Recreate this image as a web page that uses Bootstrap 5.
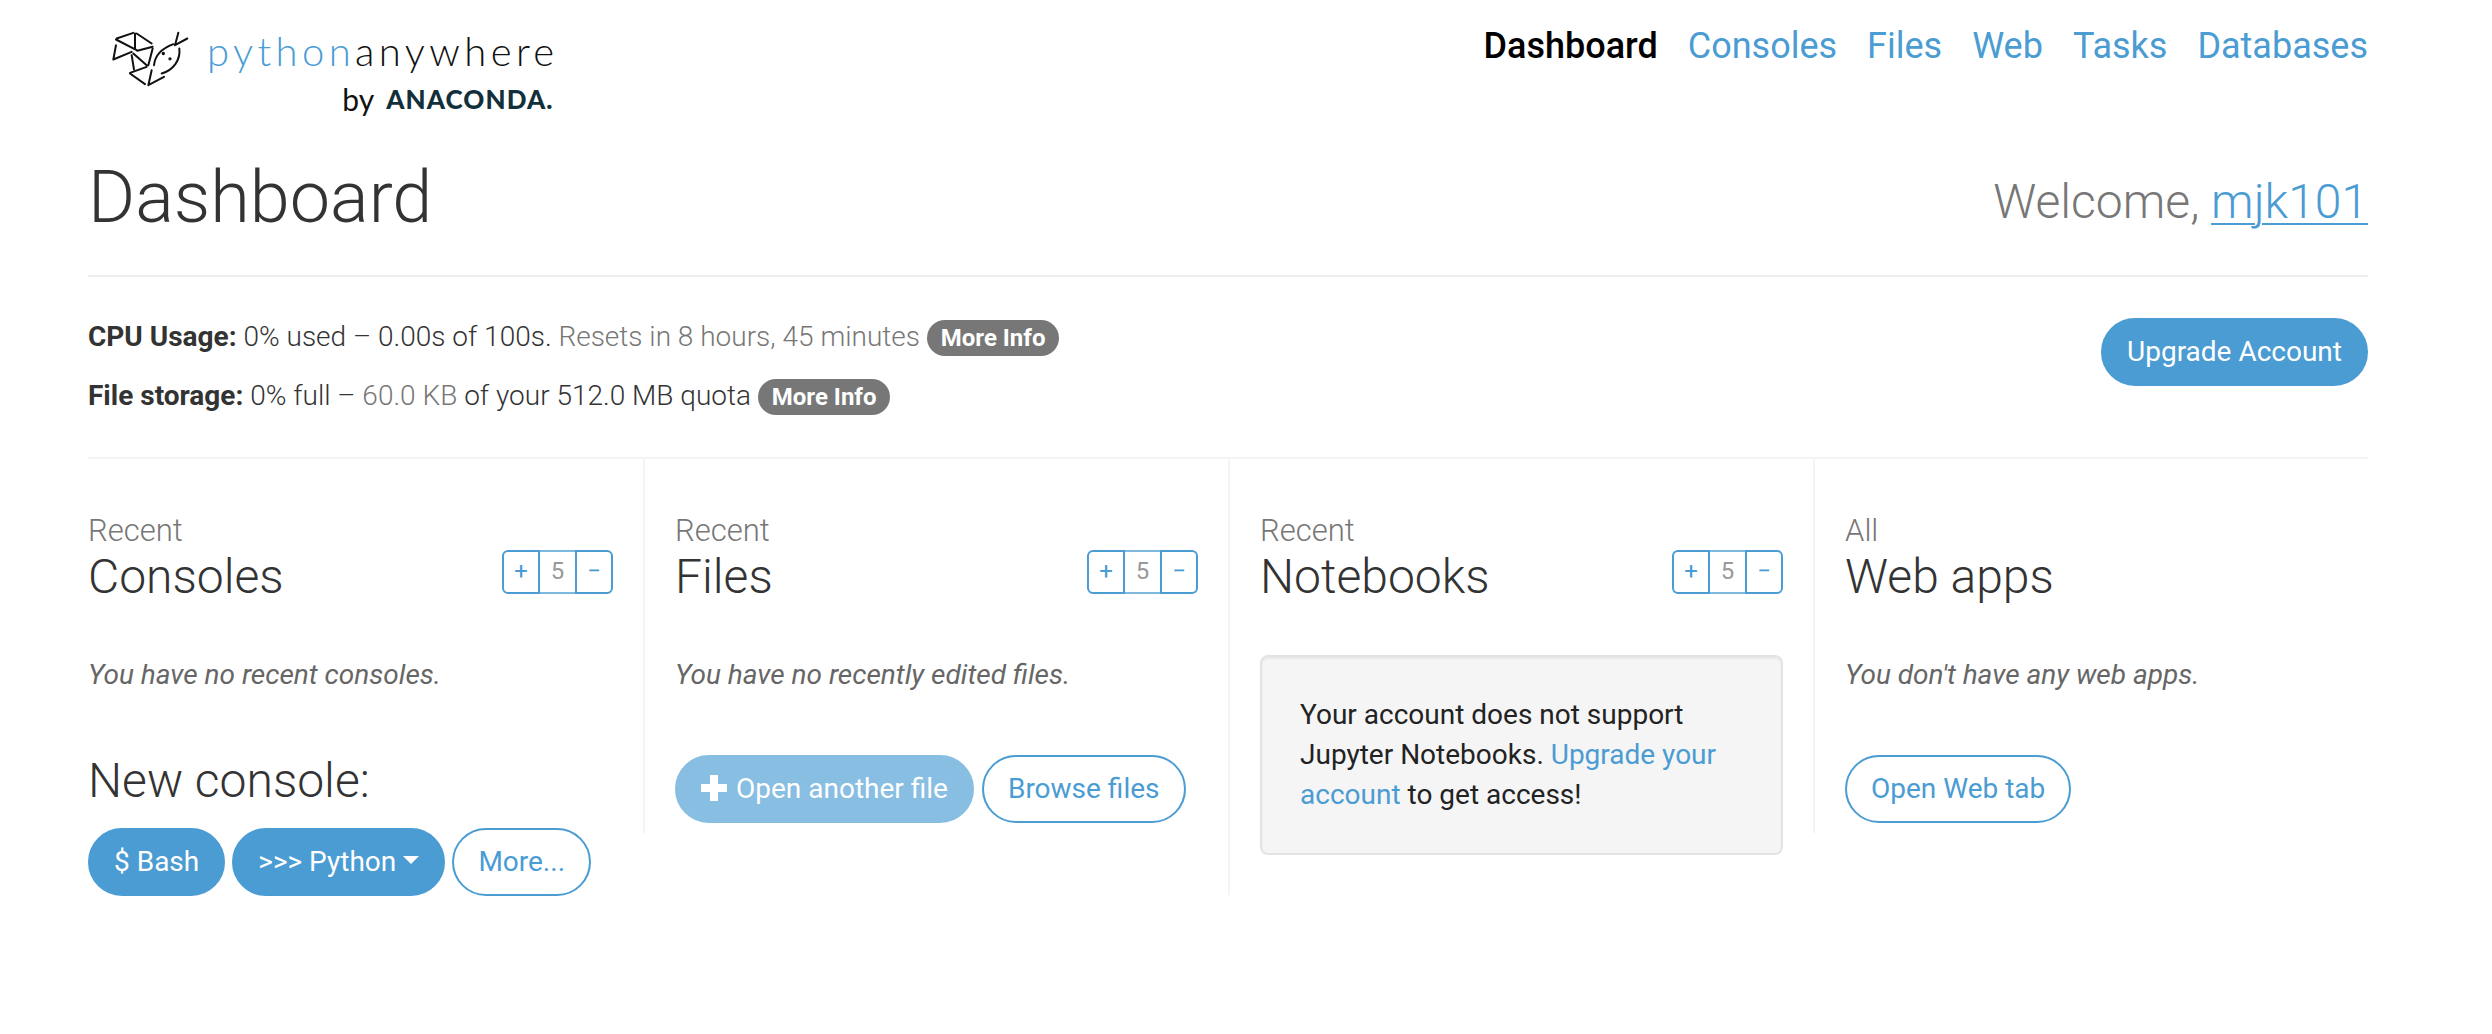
<!DOCTYPE html>
<html lang="en">
<head>
    <meta charset="UTF-8">
    <title>Dashboard : PythonAnywhere</title>
    <link href="https://cdn.jsdelivr.net/npm/bootstrap@5.3.0/dist/css/bootstrap.min.css" rel="stylesheet">
    <style>
        body { font-family: Roboto, "Liberation Sans", sans-serif; font-size: 28px; font-weight: 300; line-height: 40px; color: #333; background: #fff; }
        a { color: #4a9cd3; text-decoration: none; }
        .pa-page { width: 2340px; margin-left: 58px; padding: 0 30px; }
        .pa-header { height: 120px; }
        .pa-logo { color: #000; padding-left: 22px; padding-top: 28px; gap: 17px; }
        .pa-logo svg { width: 80px; height: 57px; margin-top: 2px; }
        .pa-logo-name { font-family: Lato, sans-serif; font-weight: 300; font-size: 40px; line-height: 46px; letter-spacing: 4.4px; color: #111; margin-right: -4px; }
        .pa-logo-name span { color: #4a9cd3; }
        .pa-logo-by { font-family: Lato, sans-serif; font-size: 30px; font-weight: 400; line-height: 36px; color: #111; gap: 12px; margin-top: 7px; margin-right: 1px; }
        .pa-logo-by b { font-family: Lato, sans-serif; font-weight: 900; font-size: 26px; color: #12303b; letter-spacing: 1.1px; }
        .pa-nav { gap: 30px; font-size: 36px; font-weight: 400; line-height: 50px; padding-top: 21px; }
        .pa-nav a.pa-current { color: #000; font-weight: 500; }
        .pa-title { height: 157px; border-bottom: 2px solid #eee; }
        .pa-title h1 { font-size: 72px; font-weight: 300; line-height: 80px; margin: 38px 0 0; }
        .pa-welcome { font-size: 48px; font-weight: 300; color: #777; line-height: 60px; margin-top: 52px; }
        .pa-welcome a { text-decoration: underline; text-underline-offset: 5px; text-decoration-thickness: 2px; }
        .pa-usage { height: 182px; border-bottom: 2px solid #f4f4f4; padding-top: 40px; }
        .pa-usage p { margin: 0 0 19px; line-height: 40px; }
        .pa-usage b { font-weight: 700; }
        .pa-muted { color: #777; }
        .pa-info { display: inline-block; background: #777; color: #fff; font-size: 24px; font-weight: 700; line-height: 24px; padding: 6px 14px; border-radius: 20px; vertical-align: 0; }
        .btn.pa-btn { --bs-btn-font-size: 28px; --bs-btn-font-weight: 400; --bs-btn-line-height: 40px; --bs-btn-padding-x: 24px; --bs-btn-padding-y: 12px; --bs-btn-border-width: 2px; --bs-btn-border-radius: 40px; --bs-btn-color: #fff; --bs-btn-bg: #4a9cd3; --bs-btn-border-color: #4a9cd3; --bs-btn-hover-color: #fff; --bs-btn-hover-bg: #3a8cc3; --bs-btn-hover-border-color: #3a8cc3; --bs-btn-disabled-color: #fff; --bs-btn-disabled-bg: #4a9cd3; --bs-btn-disabled-border-color: #4a9cd3; --bs-btn-disabled-opacity: .65; }
        .btn.pa-btn-line { --bs-btn-color: #4a9cd3; --bs-btn-bg: #fff; --bs-btn-hover-color: #4a9cd3; --bs-btn-hover-bg: #f2f8fc; --bs-btn-hover-border-color: #4a9cd3; }
        .pa-upgrade { margin-top: 1px; }
        .pa-cols { width: 2340px; margin-left: -30px; }
        .pa-col { width: 585px; padding: 0 30px; border-left: 2px solid #f4f4f4; }
        .pa-col:first-child { border-left: 0; }
        .pa-col-low { padding-bottom: 10px; }
        .pa-head { height: 124px; padding-top: 52px; }
        .pa-kicker { font-size: 31px; line-height: 40px; color: #777; font-weight: 300; }
        .pa-head h3 { font-size: 48px; font-weight: 300; line-height: 52px; margin: 0; }
        .pa-stepper { margin-top: 39px; height: 44px; width: 111px; font-size: 24px; line-height: 38px; text-align: center; font-weight: 400; }
        .pa-stepper span { color: #4a9cd3; border: 2px solid #4a9cd3; }
        .pa-stepper span:first-child { width: 38px; border-radius: 6px 0 0 6px; }
        .pa-stepper span:last-child { width: 38px; border-radius: 0 6px 6px 0; }
        .pa-stepper .pa-count { width: 35px; color: #999; font-weight: 400; border-top-color: #7db8df; border-bottom-color: #7db8df; border-left: 0; border-right: 0; }
        .pa-empty { font-style: italic; font-weight: 400; color: #666; margin: 72px 0 0; height: 40px; }
        .pa-actions { gap: 8px; margin-top: 60px; }
        .pa-new { font-size: 48px; font-weight: 300; line-height: 52px; margin: 60px 0 21px; }
        .pa-spawn { gap: 7px; }
        .pa-well { width: 523px; height: 200px; margin: 72px 0 40px; background: #f5f5f5; border: 2px solid #e3e3e3; border-radius: 8px; padding: 38px 38px; color: #222; font-weight: 400; box-shadow: inset 0 2px 2px rgba(0,0,0,.05); }
        .pa-plus { width: 26px; height: 26px; margin-right: 9px; vertical-align: -3px; }
    </style>
</head>
<body>
    <div class="pa-page">
        <div class="pa-header d-flex justify-content-between align-items-start">
            <a class="pa-logo d-flex align-items-start" href="#">
                <svg viewBox="90 60 240 170" fill="none" stroke="#111" stroke-width="6" stroke-linecap="round">
                    <path d="M110 85L160 68M108 88L170 120M100 148L108 105M100 148L155 125"/>
                    <path d="M170 70L215 100M165 70L165 115M172 122L218 110"/>
                    <path d="M160 130L200 165M155 135L162 178M218 115L205 165"/>
                    <path d="M150 188L200 170M150 190L195 222M215 180L205 225M205 225L252 200"/>
                    <path d="M222 165C225 135 245 115 280 102M298 115C302 150 280 180 245 190M295 68L285 105M322 85L285 105"/>
                    <circle cx="250" cy="130" r="2" fill="#111"/>
                    <circle cx="270" cy="146" r="2" fill="#111"/>
                </svg>
                <div class="d-flex flex-column align-items-end">
                    <div class="pa-logo-name"><span>python</span>anywhere</div>
                    <div class="pa-logo-by d-flex align-items-center"><span>by</span><b>ANACONDA.</b></div>
                </div>
            </a>
            <nav class="pa-nav d-flex">
                <a class="pa-current" href="#">Dashboard</a>
                <a href="#">Consoles</a>
                <a href="#">Files</a>
                <a href="#">Web</a>
                <a href="#">Tasks</a>
                <a href="#">Databases</a>
            </nav>
        </div>

        <div class="pa-title d-flex justify-content-between align-items-start">
            <h1>Dashboard</h1>
            <div class="pa-welcome">Welcome, <a href="#">mjk101</a></div>
        </div>

        <div class="pa-usage d-flex justify-content-between align-items-start">
            <div>
                <p><b>CPU Usage:</b> 0% used – 0.00s of 100s. <span class="pa-muted">Resets in 8 hours, 45 minutes</span> <a class="pa-info" href="#">More Info</a></p>
                <p><b>File storage:</b> 0% full – <span class="pa-muted">60.0 KB</span> of your 512.0 MB quota <a class="pa-info" href="#">More Info</a></p>
            </div>
            <a class="btn pa-btn pa-upgrade" href="#">Upgrade Account</a>
        </div>

        <div class="pa-cols d-flex align-items-start">
            <div class="pa-col">
                <div class="pa-head d-flex justify-content-between">
                    <div><div class="pa-kicker">Recent</div><h3>Consoles</h3></div>
                    <div class="pa-stepper d-flex"><span>+</span><span class="pa-count">5</span><span>−</span></div>
                </div>
                <p class="pa-empty">You have no recent consoles.</p>
                <h3 class="pa-new">New console:</h3>
                <div class="pa-spawn d-flex">
                    <a class="btn pa-btn" href="#">$ Bash</a>
                    <a class="btn pa-btn dropdown-toggle" href="#">&gt;&gt;&gt; Python</a>
                    <a class="btn pa-btn pa-btn-line" href="#">More...</a>
                </div>
            </div>
            <div class="pa-col pa-col-low">
                <div class="pa-head d-flex justify-content-between">
                    <div><div class="pa-kicker">Recent</div><h3>Files</h3></div>
                    <div class="pa-stepper d-flex"><span>+</span><span class="pa-count">5</span><span>−</span></div>
                </div>
                <p class="pa-empty">You have no recently edited files.</p>
                <div class="pa-actions d-flex">
                    <a class="btn pa-btn disabled" href="#"><svg class="pa-plus" viewBox="0 0 26 26"><path d="M9 0h8v9h9v8h-9v9H9v-9H0V9h9z" fill="#fff"/></svg>Open another file</a>
                    <a class="btn pa-btn pa-btn-line" href="#">Browse files</a>
                </div>
            </div>
            <div class="pa-col">
                <div class="pa-head d-flex justify-content-between">
                    <div><div class="pa-kicker">Recent</div><h3>Notebooks</h3></div>
                    <div class="pa-stepper d-flex"><span>+</span><span class="pa-count">5</span><span>−</span></div>
                </div>
                <div class="pa-well">Your account does not support Jupyter Notebooks. <a href="#">Upgrade your account</a> to get access!</div>
            </div>
            <div class="pa-col pa-col-low">
                <div class="pa-head">
                    <div class="pa-kicker">All</div><h3>Web apps</h3>
                </div>
                <p class="pa-empty">You don't have any web apps.</p>
                <div class="pa-actions d-flex">
                    <a class="btn pa-btn pa-btn-line" href="#">Open Web tab</a>
                </div>
            </div>
        </div>
    </div>
    <script src="https://cdn.jsdelivr.net/npm/bootstrap@5.3.0/dist/js/bootstrap.bundle.min.js"></script>
</body>
</html>
